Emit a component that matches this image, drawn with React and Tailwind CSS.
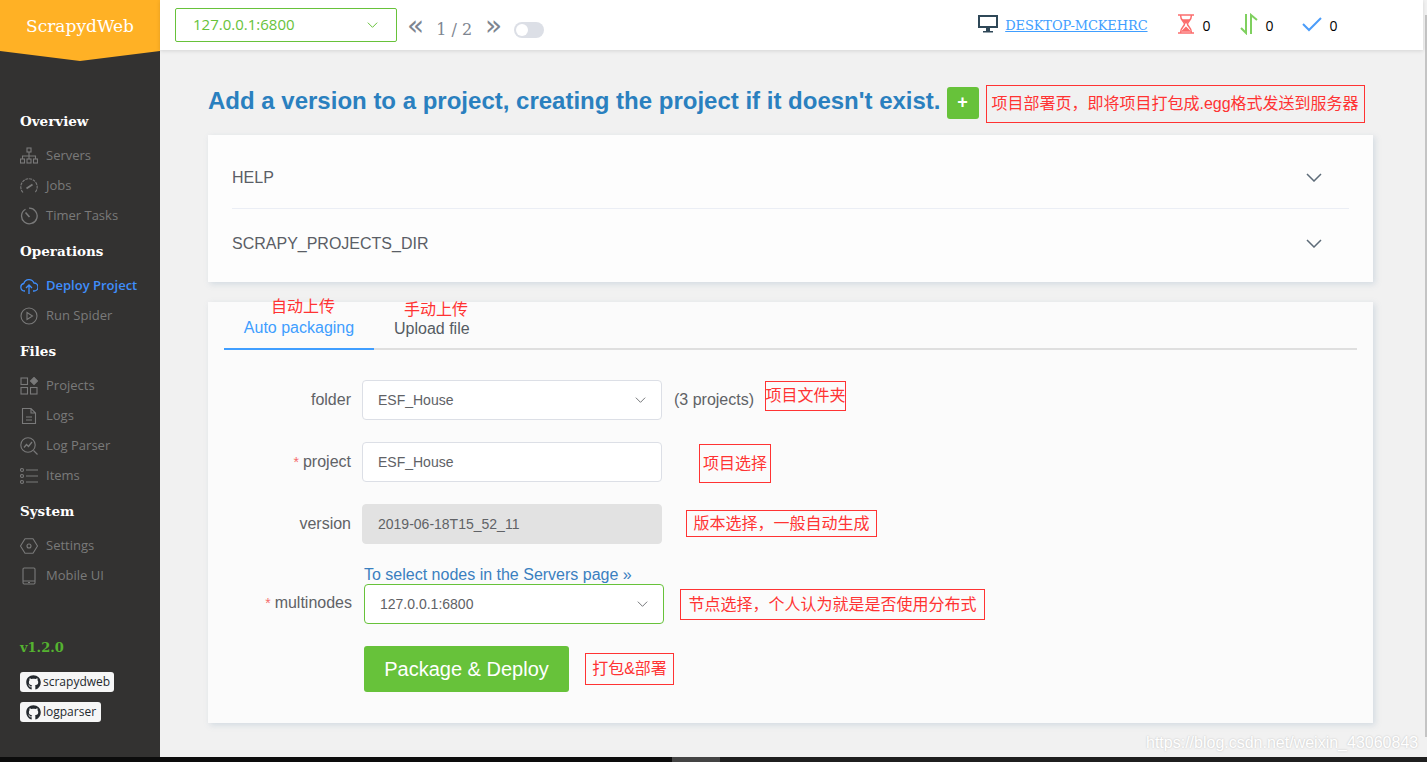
import { FaGithub } from "react-icons/fa"

const Ic = ({ children, size = 18, className = "" }) => (
    <svg width={size} height={size} viewBox="0 0 18 18" fill="none" stroke="currentColor" strokeWidth="1.1" className={`shrink-0 ${className}`}>
        {children}
    </svg>
)

const icons = {
    servers: (
        <>
            <rect x="7" y="1" width="4" height="4" />
            <path d="M9 5v4M2.5 12V9h13v3M9 9v3" />
            <rect x="0.5" y="12" width="4" height="4" />
            <rect x="7" y="12" width="4" height="4" />
            <rect x="13.5" y="12" width="4" height="4" />
        </>
    ),
    jobs: (
        <>
            <path d="M3 15.5A8.2 8.2 0 1 1 15 15.5" strokeDasharray="3 0.8" />
            <path d="M6.5 11.5L12.5 7.5" strokeWidth="1.8" />
        </>
    ),
    timer: (
        <>
            <path d="M5.5 2.2A7.8 7.8 0 1 0 9 1.2" strokeWidth="1.3" />
            <path d="M5.5 5.5L9.5 10" strokeWidth="1.6" />
        </>
    ),
    deploy: (
        <>
            <path d="M5 14H4.5A3.8 3.8 0 0 1 3.8 6.5 5.4 5.4 0 0 1 14 6a4 4 0 0 1 0 8h-1" strokeWidth="1.3" />
            <path d="M9 17V8.5M6 11l3-3 3 3" strokeWidth="1.3" />
        </>
    ),
    run: (
        <>
            <circle cx="9" cy="9" r="8" />
            <path d="M7 5.5L12.5 9 7 12.5z" />
        </>
    ),
    projects: (
        <>
            <rect x="1" y="1" width="6.5" height="6.5" />
            <rect x="1" y="10.5" width="6.5" height="6.5" />
            <rect x="10.5" y="10.5" width="6.5" height="6.5" />
            <path d="M14 0.5L17.5 4 14 7.5 10.5 4z" fill="currentColor" />
        </>
    ),
    logs: <path d="M2.5 1.5h8.5l4.5 4.5v10.5h-13zM11 1.5V6h4.5M6 10h6M6 13h6" />,
    parser: (
        <>
            <circle cx="8" cy="8" r="7.2" />
            <path d="M4 10.5l2.5-3 2 2 3.5-4.5" strokeWidth="1.3" />
            <path d="M13.5 13.5l4 4" />
        </>
    ),
    items: (
        <>
            <circle cx="2" cy="3" r="1.5" />
            <circle cx="2" cy="9" r="1.5" />
            <circle cx="2" cy="15" r="1.5" />
            <path d="M6 3h12M6 9h12M6 15h12" />
        </>
    ),
    settings: (
        <>
            <path d="M5 1.8h8l4.5 7.2L13 16.200H5L0.500 9z" strokeLinejoin="round" />
            <circle cx="9" cy="9" r="2" />
        </>
    ),
    mobile: (
        <>
            <rect x="3" y="1" width="12" height="16" rx="1.2" />
            <path d="M3 14h12M8 15.500h2" />
        </>
    ),
}

const nav = [
    { title: "Overview", items: [["Servers", "servers"], ["Jobs", "jobs"], ["Timer Tasks", "timer"]] },
    { title: "Operations", items: [["Deploy Project", "deploy", true], ["Run Spider", "run"]] },
    { title: "Files", items: [["Projects", "projects"], ["Logs", "logs"], ["Log Parser", "parser"], ["Items", "items"]] },
    { title: "System", items: [["Settings", "settings"], ["Mobile UI", "mobile"]] },
]

function Sidebar() {
    return (
        <div className="w-[160px] shrink-0 bg-[#333231] flex flex-col font-['Open_Sans',sans-serif]">
            <div className="h-[61px] bg-[#ffb125] [clip-path:polygon(0_0,100%_0,100%_51px,50%_61px,0_51px)] flex justify-center pt-[14px]">
                <span className="text-white text-[17px] leading-6 font-['DejaVu_Serif',serif]">ScrapydWeb</span>
            </div>
            <div className="mt-[40px]">
                {nav.map((group) => (
                    <div key={group.title}>
                        <div className="h-[40px] pl-[20px] flex items-center text-white text-[13.5px] font-bold font-['DejaVu_Serif',serif]">
                            {group.title}
                        </div>
                        {group.items.map(([label, icon, active]) => (
                            <div
                                key={label}
                                className={`h-[30px] pl-[20px] flex items-center gap-[8px] text-[13px] ${active ? "text-[#3f8efc] font-semibold" : "text-[#7a7a7a]"}`}
                            >
                                <Ic>{icons[icon]}</Ic>
                                <span>{label}</span>
                            </div>
                        ))}
                    </div>
                ))}
            </div>
            <div className="mt-[47px] pl-[20px] h-[20px] flex items-center text-[#55b330] text-[13px] font-bold font-['DejaVu_Serif',serif]">
                v1.2.0
            </div>
            <Badge label="scrapydweb" className="mt-[14px] w-[94px]" />
            <Badge label="logparser" className="mt-[10px] w-[81px]" />
        </div>
    )
}

function Badge({ label, className }) {
    return (
        <div className={`ml-[20px] h-[20px] bg-[#f6f6f6] rounded-[3px] flex items-center gap-[2px] pl-[6px] text-[#24292e] text-[12px] ${className}`}>
            <FaGithub className="text-[15px]" />
            <span>{label}</span>
        </div>
    )
}

const Chevron = ({ w = 16, h = 9, color = "#5d6b78", sw = 1.5 }) => (
    <svg width={w} height={h} viewBox="0 0 16 9" fill="none" stroke={color} strokeWidth={sw} className="shrink-0">
        <path d="M1 1l7 7 7-7" />
    </svg>
)

function TopBar() {
    return (
        <div className="h-[50px] bg-white shadow-[0_1px_4px_rgba(0,0,0,0.12)] flex items-center pl-[15px] shrink-0 relative">
            <div className="w-[222px] h-[34px] -mt-[1px] border border-[#67c23a] rounded-[2px] flex items-center justify-between pl-[17px] pr-[18px] text-[#67c23a] text-[15px] font-['Open_Sans',sans-serif]">
                <span>127.0.0.1:6800</span>
                <Chevron w={11} h={6} color="#67c23a" sw={1.5} />
            </div>
            <span className="ml-[10px] mt-[1px] text-[#7d8590] text-[28px] leading-none font-['DejaVu_Sans',sans-serif]">«</span>
            <span className="ml-[12px] mt-[10px] text-[#7d8590] text-[16px] font-['DejaVu_Serif',serif]">1 / 2</span>
            <span className="ml-[13px] mt-[1px] text-[#7d8590] text-[28px] leading-none font-['DejaVu_Sans',sans-serif]">»</span>
            <div className="ml-[12px] mt-[9px] w-[30px] h-[16px] rounded-full bg-[#dcdfe6] p-[2px]">
                <div className="w-[12px] h-[12px] rounded-full bg-white" />
            </div>
            <svg width="22" height="20" viewBox="0 0 22 20" className="ml-[433px] -mt-[2px] shrink-0">
                <path fillRule="evenodd" fill="#2f4858" d="M1 1h20v13H1zM3 3v9h16V3zM9 14h4v3h3v1.500H6V17h3z" />
            </svg>
            <a className="ml-[6px] mt-[2px] text-[#409eff] underline text-[13px] font-['DejaVu_Serif',serif] tracking-[-0.1px]">DESKTOP-MCKEHRC</a>
            <svg width="16" height="20" viewBox="0 0 16 20" fill="none" stroke="#fb6e6e" strokeWidth="1.500" className="ml-[30px] -mt-[3px] shrink-0">
                <path d="M0 1h16M0 19h16M2.500 1c0 6 4 6.500 4 9s-4 3-4 9M13.500 1c0 6-4 6.500-4 9s4 3 4 9" />
                <path d="M4.500 17L8 13.500 11.500 17z" fill="#fb6e6e" />
                <path d="M5 6h6L8 9z" fill="#fb6e6e" />
            </svg>
            <span className="ml-[9px] text-black text-[14px] font-['Open_Sans',sans-serif]">0</span>
            <svg width="19" height="22" viewBox="0 0 19 22" fill="none" stroke="#7fd05f" strokeWidth="2" className="ml-[29px] -mt-[2px] shrink-0">
                <path d="M6 1v19L1 15M11 21V2l6 5" />
            </svg>
            <span className="ml-[7px] text-black text-[14px] font-['Open_Sans',sans-serif]">0</span>
            <svg width="20" height="16" viewBox="0 0 20 16" fill="none" stroke="#4b9dfa" strokeWidth="2" className="ml-[28px] -mt-[2px] shrink-0">
                <path d="M1 8l6 6L19 2" />
            </svg>
            <span className="ml-[8px] text-black text-[14px] font-['Open_Sans',sans-serif]">0</span>
        </div>
    )
}

const Note = ({ children, className = "" }) => (
    <div className={`border border-[#f33] text-[#f33] text-[16px] flex items-center justify-center whitespace-nowrap font-['Liberation_Sans','Noto_Sans_CJK_SC',sans-serif] ${className}`}>
        {children}
    </div>
)

const Label = ({ required, children, className = "" }) => (
    <div className={`shrink-0 text-right text-[16px] text-[#606266] ${className}`}>
        {required && <span className="text-[#f56c6c] text-[14px] mr-[4px]">*</span>}
        {children}
    </div>
)

const Field = ({ children, arrow, className = "" }) => (
    <div className={`w-[300px] h-[40px] shrink-0 rounded-[4px] border flex items-center justify-between pl-[15px] pr-[15px] text-[14px] text-[#606266] ${className}`}>
        <span className="mt-[1px]">{children}</span>
        {arrow && <Chevron w={11} h={6} color="#606266" sw={1.3} />}
    </div>
)

function Content() {
    return (
        <div className="flex-1 min-w-0 pl-[48px] pr-[50px] font-['Liberation_Sans',sans-serif]">
            <div className="mt-[35px] h-[38px] flex items-center">
                <h1 className="text-[24px] font-bold text-[#2a80bf] whitespace-nowrap leading-none -mt-[6px]">
                    Add a version to a project, creating the project if it doesn't exist.
                </h1>
                <div className="ml-[6px] w-[32px] h-[32px] -mt-[3px] rounded-[3px] bg-[#67c23a] text-white flex items-center justify-center text-[18px] font-bold shrink-0">+</div>
                <Note className="ml-[7px] w-[379px] h-[38px] shrink-0">项目部署页，即将项目打包成.egg格式发送到服务器</Note>
            </div>

            <div className="mt-[12px] h-[147px] bg-[#fdfdfd] shadow-[2px_2px_6px_rgba(120,150,180,0.25)] px-[24px] text-[16px] text-[#5a5e66]">
                <div className="h-[74px] flex items-center justify-between border-b border-[#ebeef5] pr-[27px] pt-[11px]">
                    <span className="mt-[2px]">HELP</span>
                    <Chevron />
                </div>
                <div className="h-[73px] flex items-center justify-between pr-[27px] pb-[5px]">
                    <span className="mt-[2px]">SCRAPY_PROJECTS_DIR</span>
                    <Chevron />
                </div>
            </div>

            <div className="mt-[20px] h-[421px] bg-[#fbfbfb] shadow-[2px_2px_6px_rgba(120,150,180,0.25)] px-[16px]">
                <div className="h-[48px] flex border-b-2 border-[#dfdfdf] text-[16px]">
                    <div className="relative w-[150px] h-[48px] flex items-center justify-center pt-[6px] border-b-2 border-[#409eff] text-[#409eff]">
                        Auto packaging
                        <span className="absolute left-[47px] top-[-7px] text-[#f33] font-['Noto_Sans_CJK_SC',sans-serif] leading-5 whitespace-nowrap">自动上传</span>
                    </div>
                    <div className="relative px-[20px] h-[48px] flex items-center pt-[5px] text-[#555b63]">
                        Upload file
                        <span className="absolute left-[30px] top-[-4px] text-[#f33] font-['Noto_Sans_CJK_SC',sans-serif] leading-5 whitespace-nowrap">手动上传</span>
                    </div>
                </div>

                <div className="mt-[30px] flex flex-col gap-[22px]">
                    <div className="h-[40px] flex items-center">
                        <Label className="w-[127px]">folder</Label>
                        <Field arrow className="ml-[11px] bg-white border-[#dcdfe6]">ESF_House</Field>
                        <span className="ml-[12px] text-[16px] text-[#606266]">(3 projects)</span>
                        <Note className="ml-[11px] w-[81px] h-[30px] -mt-[8px]">项目文件夹</Note>
                    </div>
                    <div className="h-[40px] flex items-center">
                        <Label className="w-[127px]" required>project</Label>
                        <Field className="ml-[11px] bg-white border-[#dcdfe6]">ESF_House</Field>
                        <Note className="ml-[37px] w-[72px] h-[39px] mt-[3px]">项目选择</Note>
                    </div>
                    <div className="h-[40px] flex items-center">
                        <Label className="w-[127px]">version</Label>
                        <Field className="ml-[11px] bg-[#e2e2e2] border-[#e2e2e2]">2019-06-18T15_52_11</Field>
                        <Note className="ml-[24px] w-[191px] h-[27px] -mt-[1px]">版本选择，一般自动生成</Note>
                    </div>
                    <div className="h-[58px] flex items-end">
                        <Label className="w-[128px] mb-[9px]" required>multinodes</Label>
                        <div className="ml-[12px] flex flex-col w-[300px] shrink-0">
                            <a className="h-[18px] text-[16px] leading-[18px] text-[#3a7fc0] whitespace-nowrap">To select nodes in the Servers page »</a>
                            <Field arrow className="bg-white border-[#67c23a]">127.0.0.1:6800</Field>
                        </div>
                        <Note className="ml-[16px] w-[305px] h-[31px] mb-[4px]">节点选择，个人认为就是是否使用分布式</Note>
                    </div>
                    <div className="flex items-start pl-[140px]">
                        <div className="w-[205px] h-[46px] rounded-[3px] bg-[#67c23a] text-white text-[20px] flex items-center justify-center">
                            Package &amp; Deploy
                        </div>
                        <Note className="ml-[16px] w-[89px] h-[32px] mt-[7px]">打包&amp;部署</Note>
                    </div>
                </div>
            </div>
        </div>
    )
}

export default function App() {
    return (
        <div className="relative w-[1427px] h-[762px] overflow-hidden flex flex-col bg-[#f1f1f1]">
            <div className="flex h-[757px]">
                <Sidebar />
                <div className="flex-1 min-w-0 flex flex-col">
                    <TopBar />
                    <Content />
                </div>
                <div className="w-[4px] shrink-0 pl-[2px] pt-[15px]">
                    <div className="h-[722px] bg-[#c4c4c4]" />
                </div>
            </div>
            <div className="h-[5px] bg-[#0c0c0c] flex pl-[672px]">
                <div className="w-[48px] bg-[#444]" />
                <div className="flex-1 bg-[#1f1f1f]" />
            </div>
            <span className="absolute left-[1146px] top-[734px] text-[16px] leading-[18px] text-white [text-shadow:0_0_2px_rgba(0,0,0,0.22)] whitespace-nowrap font-['Liberation_Sans',sans-serif]">
                https://blog.csdn.net/weixin_43060843
            </span>
        </div>
    )
}
